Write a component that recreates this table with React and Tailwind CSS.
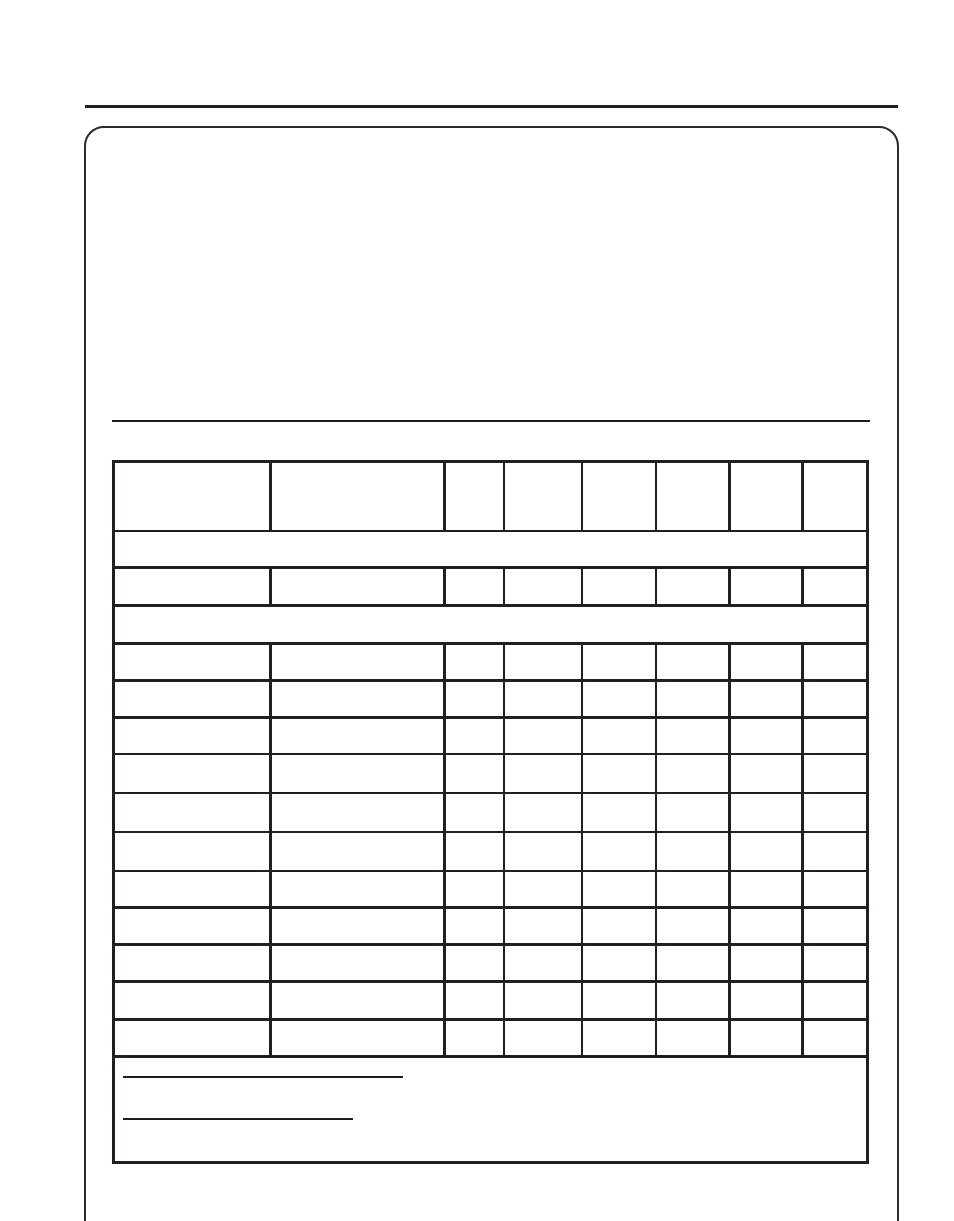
const cols = [
  { w: "w-[157px]", b: "border-r-[3px]" },
  { w: "w-[174px]", b: "border-r-[3px]" },
  { w: "w-[59px]", b: "border-r-2" },
  { w: "w-[78px]", b: "border-r-2" },
  { w: "w-[74px]", b: "border-r-2" },
  { w: "w-[74px]", b: "border-r-[3px]" },
  { w: "w-[73px]", b: "border-r-[3px]" },
  { w: "flex-1", b: "" },
];

// h = row height incl. bottom border, span = full-width section row
const rows = [
  { h: "h-[69px]", b: "border-b-2" },
  { h: "h-[37px]", b: "border-b-[3px]", span: true },
  { h: "h-[38px]", b: "border-b-[3px]" },
  { h: "h-[38px]", b: "border-b-[3px]", span: true },
  { h: "h-[37px]", b: "border-b-[3px]" },
  { h: "h-[37px]", b: "border-b-[3px]" },
  { h: "h-[36px]", b: "border-b-2" },
  { h: "h-[39px]", b: "border-b-2" },
  { h: "h-[39px]", b: "border-b-2" },
  { h: "h-[39px]", b: "border-b-2" },
  { h: "h-[37px]", b: "border-b-[3px]" },
  { h: "h-[37px]", b: "border-b-[3px]" },
  { h: "h-[37px]", b: "border-b-[3px]" },
  { h: "h-[38px]", b: "border-b-[3px]" },
  { h: "h-[37px]", b: "border-b-[3px]" },
];

function Row({ row }) {
  if (row.span) {
    return <div className={`${row.h} ${row.b} border-[#231f20] box-border`} />;
  }
  return (
    <div className={`flex ${row.h} ${row.b} border-[#231f20] box-border`}>
      {cols.map((c, i) => (
        <div key={i} className={`${c.w} ${c.b} border-[#231f20] box-border h-full`} />
      ))}
    </div>
  );
}

export default function App() {
  return (
    <div className="w-[954px] h-[1221px] overflow-hidden bg-white font-['Liberation_Sans',sans-serif]">
      <div className="pt-[105px] pl-[85px]">
        <div className="w-[813px] h-[3px] bg-[#231f20]" />
      </div>

      <div className="ml-[84px] mt-[18px] w-[815px] h-[1140px] border-2 border-[#2e2b2c] rounded-[20px]">
        <div className="pl-[26px] pt-[292px]">
          <div className="w-[758px] h-[2px] bg-[#231f20]" />

          <div className="mt-[38px] w-[757px] border-[3px] border-[#231f20] box-border">
            {rows.map((r, i) => (
              <Row key={i} row={r} />
            ))}

            <div className="h-[103px] pt-[18px] pl-[8px] flex flex-col">
              <div className="w-[280px] h-[2px] bg-[#231f20]" />
              <div className="mt-[40px] w-[230px] h-[2px] bg-[#231f20]" />
            </div>
          </div>
        </div>
      </div>
    </div>
  );
}
